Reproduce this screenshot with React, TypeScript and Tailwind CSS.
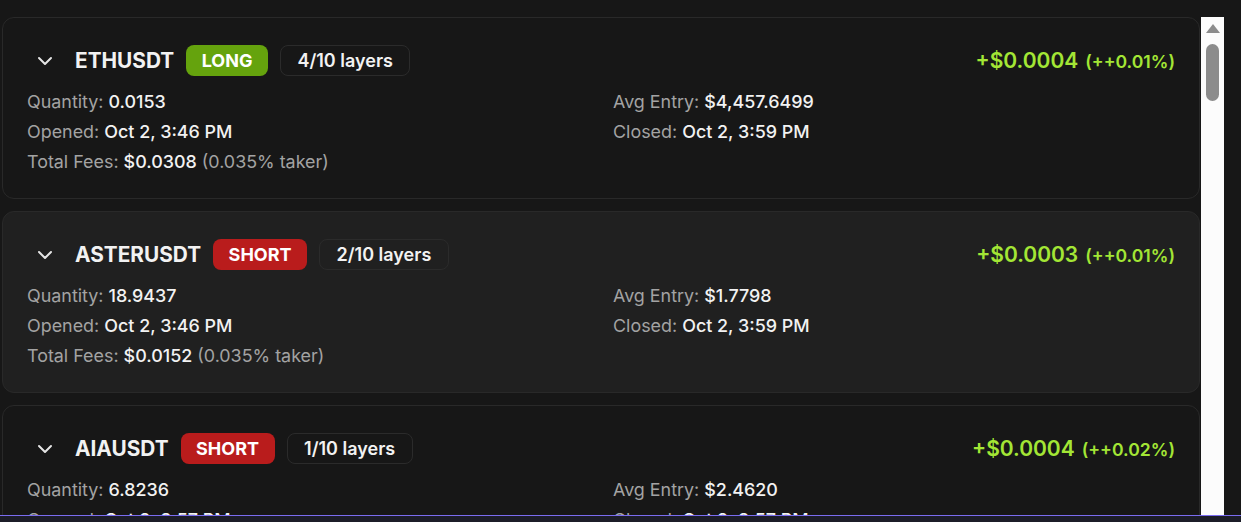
import React from "react";

type Pos = {
  symbol: string;
  side: "LONG" | "SHORT";
  layers: string;
  pnl: string;
  pct: string;
  qty: string;
  avg: string;
  opened: string;
  closed: string;
  fees: string;
  hover?: boolean;
};

const positions: Pos[] = [
  {
    symbol: "ETHUSDT",
    side: "LONG",
    layers: "4/10 layers",
    pnl: "+$0.0004",
    pct: "(++0.01%)",
    qty: "0.0153",
    avg: "$4,457.6499",
    opened: "Oct 2, 3:46 PM",
    closed: "Oct 2, 3:59 PM",
    fees: "$0.0308",
  },
  {
    symbol: "ASTERUSDT",
    side: "SHORT",
    layers: "2/10 layers",
    pnl: "+$0.0003",
    pct: "(++0.01%)",
    qty: "18.9437",
    avg: "$1.7798",
    opened: "Oct 2, 3:46 PM",
    closed: "Oct 2, 3:59 PM",
    fees: "$0.0152",
    hover: true,
  },
  {
    symbol: "AIAUSDT",
    side: "SHORT",
    layers: "1/10 layers",
    pnl: "+$0.0004",
    pct: "(++0.02%)",
    qty: "6.8236",
    avg: "$2.4620",
    opened: "Oct 2, 3:57 PM",
    closed: "Oct 2, 3:57 PM",
    fees: "$0.0048",
  },
];

function Chevron() {
  return (
    <svg width="24" height="24" viewBox="0 0 24 24" fill="none" stroke="currentColor" strokeWidth="2" strokeLinecap="round" strokeLinejoin="round">
      <path d="m6 9 6 6 6-6" />
    </svg>
  );
}

function Field({ label, value, extra }: { label: string; value: string; extra?: string }) {
  return (
    <div className="leading-[30px] text-[17.9px] whitespace-nowrap">
      <span className="text-[#a3a3a3]">{label} </span>
      <span className="text-[#f2f2f2] font-medium">{value}</span>
      {extra && <span className="text-[#a3a3a3]"> {extra}</span>}
    </div>
  );
}

function Card({ p }: { p: Pos }) {
  return (
    <div
      className={`shrink-0 rounded-xl border border-[#292929] px-6 pt-[27px] pb-[21px] ${
        p.hover ? "bg-[#202020]" : "bg-[#171717]"
      }`}
    >
      <div className="flex items-center h-[31px]">
        <div className="ml-[6px] text-[#e5e5e5]">
          <Chevron />
        </div>
        <div className="ml-[18px] text-[20.8px] font-bold text-[#f2f2f2]">{p.symbol}</div>
        <div
          className={`ml-3 h-[31px] px-[15.5px] rounded-lg flex items-center text-[18px] font-bold text-white ${
            p.side === "LONG" ? "bg-[#65a30d]" : "bg-[#b91c1c]"
          }`}
        >
          {p.side}
        </div>
        <div className="ml-3 h-[31px] px-[16.5px] rounded-lg border border-[#2b2b2b] flex items-center text-[18px] font-semibold text-[#f2f2f2]">
          {p.layers}
        </div>
        <div className="ml-auto flex items-baseline gap-[7px] text-[#a3e635]">
          <span className="text-[21px] font-semibold">{p.pnl}</span>
          <span className="text-[17.6px] font-semibold">{p.pct}</span>
        </div>
      </div>
      <div className="mt-[11px] grid grid-cols-2 gap-x-6">
        <Field label="Quantity:" value={p.qty} />
        <Field label="Avg Entry:" value={p.avg} />
        <Field label="Opened:" value={p.opened} />
        <Field label="Closed:" value={p.closed} />
        <Field label="Total Fees:" value={p.fees} extra="(0.035% taker)" />
      </div>
    </div>
  );
}

export default function App() {
  return (
    <div
      className="w-[1241px] h-[522px] bg-[#171717] overflow-hidden flex flex-col"
      style={{ fontFamily: "Inter, 'Noto Sans', sans-serif" }}
    >
      <div className="flex-1 min-h-0 flex pt-[17px] pl-[2px]">
        <div className="w-[1198px] flex flex-col gap-3 overflow-hidden">
          {positions.map((p) => (
            <Card key={p.symbol} p={p} />
          ))}
        </div>
        <div className="ml-px w-[23px] bg-[#fcfcfc] flex flex-col items-center">
          <div className="mt-[7px] w-0 h-0 border-l-[7px] border-r-[7px] border-b-[9px] border-l-transparent border-r-transparent border-b-[#8c8c8c]" />
          <div className="mt-[11px] w-[13px] h-[57px] rounded-full bg-[#8c8c8c]" />
        </div>
        <div className="w-[17px]" />
      </div>
      <div className="h-[7px] shrink-0 border-t border-[#7a6cf0] bg-[#1c1d28]" />
    </div>
  );
}
